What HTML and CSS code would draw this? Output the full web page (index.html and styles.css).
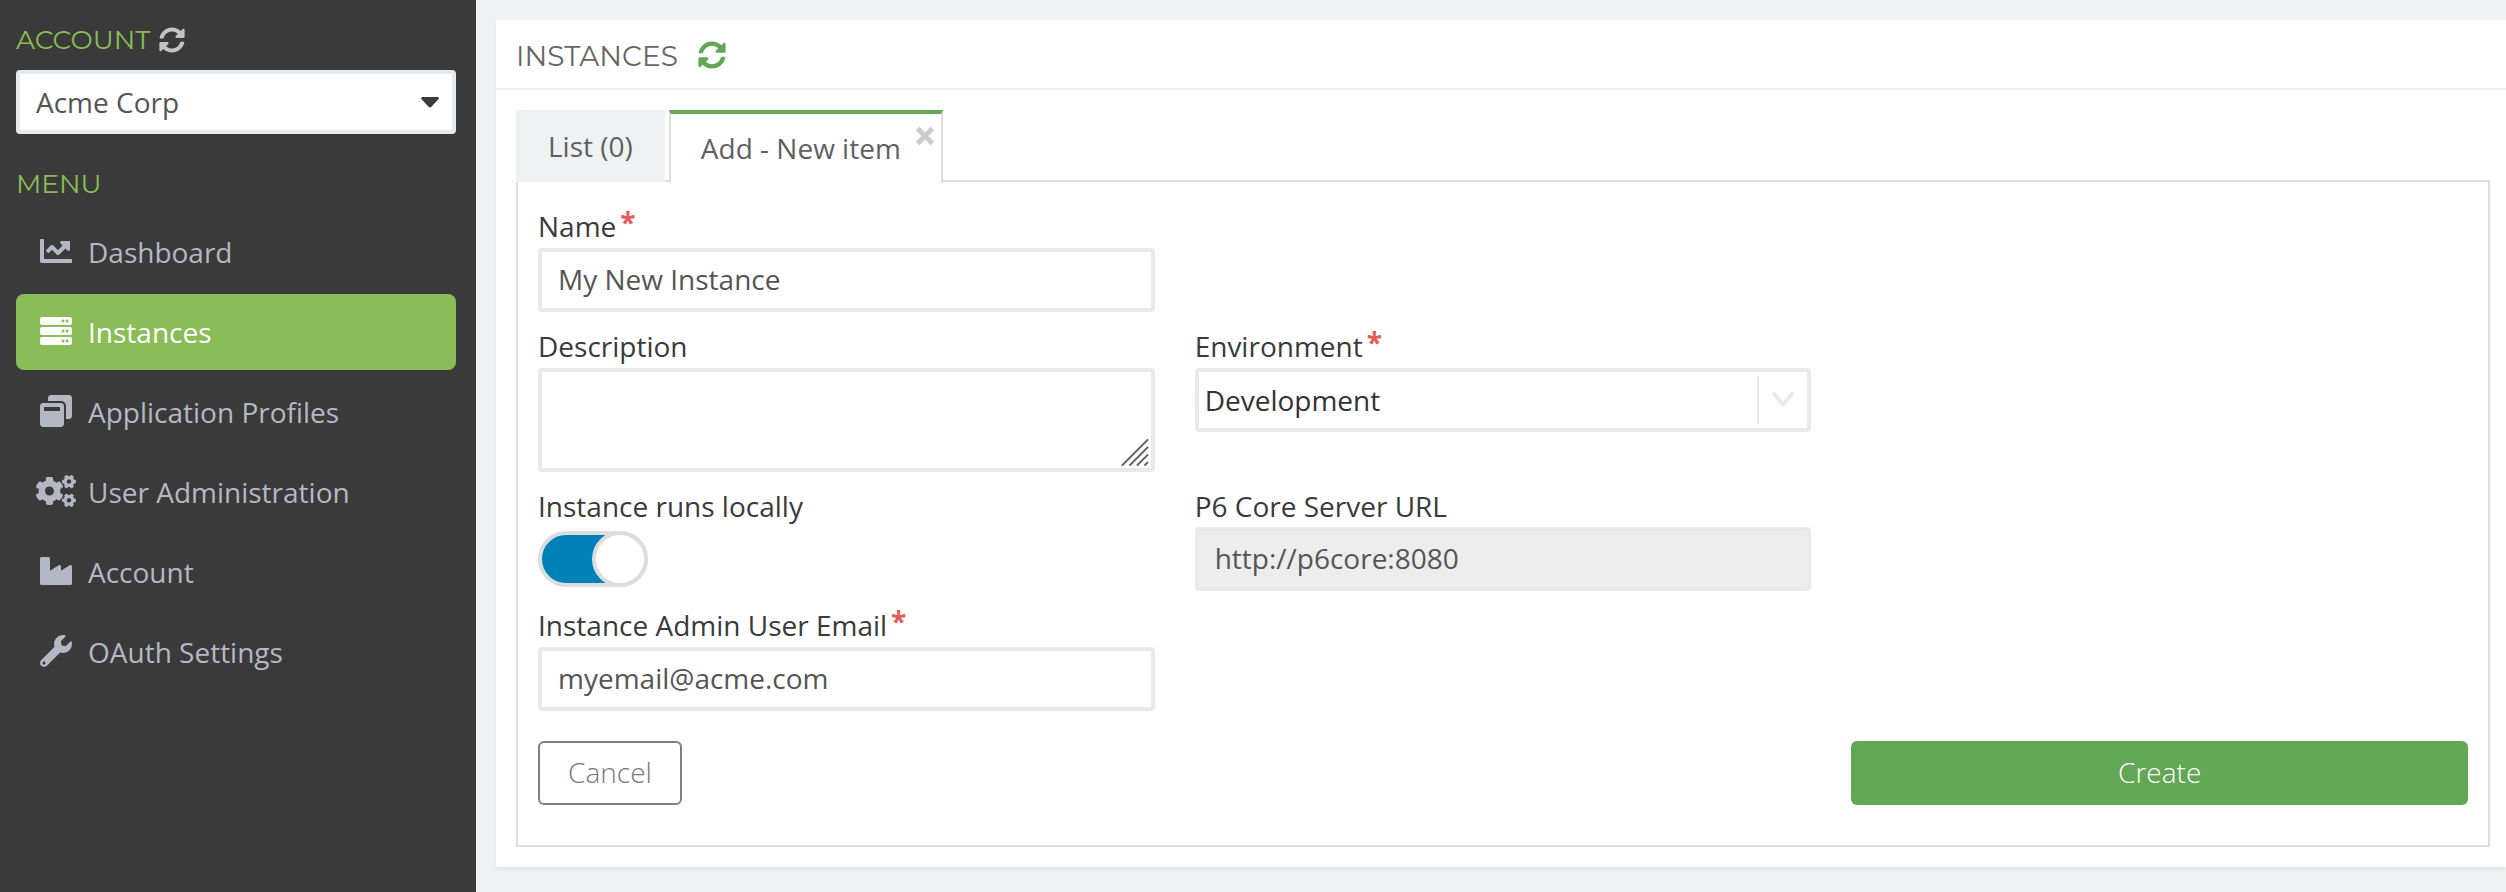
FILE: index.html
```html
<!DOCTYPE html>
<html lang="en">
<head>
<meta charset="utf-8">
<title>Instances</title>
<link rel="stylesheet" href="styles.css">
</head>
<body>
<svg class="defs" aria-hidden="true">
  <symbol id="sync" viewBox="0 0 512 512"><path d="M370.72 133.28C339.458 104.008 298.888 87.962 255.848 88c-77.458.068-144.328 53.178-162.791 126.85-1.344 5.363-6.122 9.15-11.651 9.15H24.103c-7.498 0-13.194-6.807-11.807-14.176C33.933 94.924 134.813 8 256 8c66.448 0 126.791 26.136 171.315 68.685L463.03 40.97C478.149 25.851 504 36.559 504 57.941V192c0 13.255-10.745 24-24 24H345.941c-21.382 0-32.09-25.851-16.971-40.971l41.75-41.749zM32 296h134.059c21.382 0 32.09 25.851 16.971 40.971l-41.75 41.75c31.262 29.273 71.835 45.319 114.876 45.28 77.418-.07 144.315-53.144 162.787-126.849 1.344-5.363 6.122-9.15 11.651-9.15h57.304c7.498 0 13.194 6.807 11.807 14.176C478.067 417.076 377.187 504 256 504c-66.448 0-126.791-26.136-171.315-68.685L48.97 471.03C33.851 486.149 8 475.441 8 454.059V320c0-13.255 10.745-24 24-24z"/></symbol>
  <path id="small-cog" d="M512.1 191l-8.2 14.3c-3 5.3-9.4 7.5-15.1 5.4-11.8-4.4-22.6-10.7-32.1-18.6-4.6-3.8-5.8-10.5-2.8-15.7l8.2-14.3c-6.9-8-12.3-17.3-15.9-27.4h-16.5c-6 0-11.2-4.3-12.2-10.3-2-12-2.1-24.6 0-37.1 1-6 6.2-10.4 12.2-10.4h16.5c3.6-10.1 9-19.4 15.9-27.4l-8.2-14.3c-3-5.2-1.9-11.9 2.8-15.7 9.5-7.9 20.4-14.2 32.1-18.6 5.7-2.1 12.1.1 15.1 5.4l8.2 14.3c10.5-1.9 21.2-1.9 31.7 0L552 6.3c3-5.3 9.4-7.5 15.1-5.4 11.8 4.4 22.6 10.7 32.1 18.6 4.6 3.8 5.8 10.5 2.8 15.7l-8.2 14.3c6.9 8 12.3 17.3 15.9 27.4h16.5c6 0 11.2 4.3 12.2 10.3 2 12 2.1 24.6 0 37.1-1 6-6.2 10.4-12.2 10.4h-16.5c-3.6 10.1-9 19.4-15.9 27.4l8.2 14.3c3 5.2 1.9 11.9-2.8 15.7-9.5 7.9-20.4 14.2-32.1 18.6-5.7 2.1-12.1-.1-15.1-5.4l-8.2-14.3c-10.4 1.9-21.2 1.9-31.7 0zm-10.5-58.8c38.5 29.6 82.4-14.3 52.8-52.8-38.5-29.7-82.4 14.3-52.8 52.8z"/>
</svg>
<div class="app">
  <aside class="sidebar">
    <h2 class="side-title">ACCOUNT <svg class="sync"><use href="#sync"/></svg></h2>
    <div class="account-select">Acme Corp<svg class="caret" viewBox="0 0 18 11"><path d="M1.2 0h15.6q1.8.5.6 2.2l-7 7.6q-1.4 1.4-2.8 0l-7-7.6Q-.6.5 1.2 0z"/></svg></div>
    <h2 class="side-title menu-title">MENU</h2>
    <nav class="menu">
      <a class="item"><svg class="icon" viewBox="0 0 512 512"><path d="M496 384H64V80c0-8.84-7.16-16-16-16H16C7.16 64 0 71.16 0 80v336c0 17.67 14.33 32 32 32h464c8.84 0 16-7.16 16-16v-32c0-8.84-7.16-16-16-16zM464 96H345.94c-21.38 0-32.09 25.85-16.97 40.97l32.4 32.4L288 242.75l-73.37-73.37c-12.5-12.5-32.76-12.5-45.25 0l-68.69 68.69c-6.25 6.25-6.25 16.38 0 22.63l22.62 22.62c6.25 6.25 16.38 6.25 22.63 0L192 237.25l73.37 73.37c12.5 12.5 32.76 12.5 45.25 0l96-96 32.4 32.4c15.12 15.12 40.97 4.41 40.97-16.97V112c.01-8.84-7.15-16-15.99-16z"/></svg>Dashboard</a>
      <a class="item active"><svg class="icon" viewBox="0 0 512 512"><g id="rack"><path d="M480 160H32c-17.673 0-32-14.327-32-32V64c0-17.673 14.327-32 32-32h448c17.673 0 32 14.327 32 32v64c0 17.673-14.327 32-32 32zm-48-88c-13.255 0-24 10.745-24 24s10.745 24 24 24 24-10.745 24-24-10.745-24-24-24zm-64 0c-13.255 0-24 10.745-24 24s10.745 24 24 24 24-10.745 24-24-10.745-24-24-24z"/></g><use href="#rack" y="160"/><use href="#rack" y="320"/></svg>Instances</a>
      <a class="item"><svg class="icon" viewBox="0 0 512 512"><path d="M512 48v288c0 26.5-21.5 48-48 48h-48V176c0-44.1-35.9-80-80-80H128V48c0-26.5 21.5-48 48-48h288c26.5 0 48 21.5 48 48zM384 176v288c0 26.5-21.5 48-48 48H48c-26.5 0-48-21.5-48-48V176c0-26.5 21.5-48 48-48h288c26.5 0 48 21.5 48 48zm-64 28c0-6.6-5.4-12-12-12H76c-6.6 0-12 5.4-12 12v52h256v-52z"/></svg>Application Profiles</a>
      <a class="item"><svg class="icon wide" viewBox="0 0 640 512"><use href="#small-cog"/><use href="#small-cog" y="298.9"/><path d="M386.3 286.1l33.7 16.8c10.1 5.8 14.5 18.1 10.5 29.1-8.9 24.2-26.4 46.4-42.6 65.8-7.4 8.9-20.2 11.1-30.3 5.3l-29.1-16.8c-16 13.7-34.6 24.6-54.9 31.7v33.6c0 11.6-8.3 21.6-19.7 23.6-24.6 4.2-50.4 4.4-75.9 0-11.5-2-20-11.9-20-23.6V418c-20.3-7.2-38.9-18-54.9-31.7L74 403c-10 5.8-22.9 3.6-30.3-5.3-16.2-19.4-33.3-41.6-42.2-65.7-4-10.9.4-23.2 10.5-29.1l33.3-16.8c-3.9-20.9-3.9-42.4 0-63.4L12 205.8c-10.1-5.8-14.6-18.1-10.5-29 8.9-24.2 26-46.4 42.2-65.8 7.4-8.9 20.2-11.1 30.3-5.3l29.1 16.8c16-13.7 34.6-24.6 54.9-31.7V57.1c0-11.5 8.2-21.5 19.6-23.5 24.6-4.2 50.5-4.4 76-.1 11.5 2 20 11.9 20 23.6v33.6c20.3 7.2 38.9 18 54.9 31.7l29.1-16.8c10-5.8 22.9-3.6 30.3 5.3 16.2 19.4 33.2 41.6 42.1 65.8 4 10.9.1 23.2-10 29.1l-33.7 16.8c3.9 21 3.9 42.5 0 63.5zm-117.6 21.1c59.2-77-28.7-164.9-105.7-105.7-59.2 77 28.7 164.9 105.7 105.7z"/></svg>User Administration</a>
      <a class="item"><svg class="icon" viewBox="0 0 512 512"><path d="M475.115 163.781L336 252.309v-68.28c0-18.916-20.931-30.399-36.885-20.248L160 252.309V56c0-13.255-10.745-24-24-24H24C10.745 32 0 42.745 0 56v400c0 13.255 10.745 24 24 24h464c13.255 0 24-10.745 24-24V184.029c0-18.917-20.931-30.399-36.885-20.248z"/></svg>Account</a>
      <a class="item"><svg class="icon" viewBox="0 0 512 512"><path d="M507.73 109.1c-2.24-9.03-13.54-12.09-20.12-5.51l-74.36 74.36-67.88-11.31-11.31-67.88 74.36-74.36c6.62-6.62 3.43-17.9-5.66-20.16-47.38-11.74-99.55.91-136.58 37.93-39.64 39.64-50.55 97.1-34.05 147.2L18.74 402.76c-24.99 24.99-24.99 65.51 0 90.5 24.99 24.99 65.51 24.99 90.5 0l213.21-213.21c50.12 16.71 107.47 5.68 147.37-34.22 37.07-37.07 49.7-89.32 37.91-136.73zM64 472c-13.25 0-24-10.75-24-24 0-13.26 10.75-24 24-24s24 10.74 24 24c0 13.25-10.75 24-24 24z"/></svg>OAuth Settings</a>
    </nav>
  </aside>
  <main class="main">
    <section class="panel">
      <header class="panel-head"><h1 class="panel-title">INSTANCES</h1><svg class="sync green"><use href="#sync"/></svg></header>
      <div class="panel-body">
        <div class="tabs">
          <div class="tab">List (0)</div>
          <div class="tab current">Add - New item<svg class="close" viewBox="0 0 20 20"><path d="M2.6 2.6l14.8 14.8M17.4 2.6L2.6 17.4"/></svg></div>
        </div>
        <form class="form">
          <div class="row">
            <div class="field"><label class="label">Name<span class="req">*</span></label><div class="input">My New Instance</div></div>
          </div>
          <div class="row">
            <div class="field"><label class="label">Description</label><div class="input area"><svg class="grip" viewBox="0 0 28 35"><path d="M1.5 33L26.500 8M9 33L26.500 15.500M16.500 33L26.500 23M24 33L26.500 30.500"/></svg></div></div>
            <div class="field"><label class="label">Environment<span class="req">*</span></label><div class="input select">Development<span class="drop"><svg class="chevron" viewBox="0 0 24 18"><path d="M3 3l9 10.500L21 3"/></svg></span></div></div>
          </div>
          <div class="row third">
            <div class="field"><label class="label">Instance runs locally</label><div class="toggle"><span class="knob"></span></div></div>
            <div class="field"><label class="label">P6 Core Server URL</label><div class="input disabled">http://p6core:8080</div></div>
          </div>
          <div class="row">
            <div class="field"><label class="label">Instance Admin User Email<span class="req">*</span></label><div class="input">myemail@acme.com</div></div>
          </div>
          <div class="row actions">
            <div class="field"><button type="button" class="btn cancel">Cancel</button></div>
            <div class="field"></div>
            <button type="button" class="btn create">Create</button>
          </div>
        </form>
      </div>
    </section>
  </main>
</div>
</body>
</html>
```
FILE: styles.css
```css
* { box-sizing: border-box; }
body {
  margin: 0;
  background: #eef2f3;
  font-family: "Open Sans", "Noto Sans", sans-serif;
  font-size: 28px;
  line-height: 40px;
  color: #3a3a3a;
  overflow: hidden;
}
.defs { display: none; }
svg { display: block; fill: currentColor; flex: none; }

.app { display: flex; height: 892px; }

/* Sidebar */
.sidebar { width: 476px; flex: none; padding: 20px 20px 0 16px; background: #3a3a3a; }
.side-title {
  display: flex;
  align-items: center;
  gap: 9px;
  margin: 0;
  height: 40px;
  font: 400 26.5px/40px Montserrat, Lato, sans-serif;
  color: #8abd57;
}
.sync { width: 26px; height: 26px; color: #c4c4c4; }
.account-select {
  display: flex;
  align-items: center;
  justify-content: space-between;
  height: 64px;
  margin-top: 10px;
  padding: 0 13px 0 16px;
  border: 4px solid #e6eaed;
  border-radius: 4px;
  background: #fff;
  color: #555;
}
.caret { width: 18px; height: 11px; color: #3a3a3a; }
.menu-title { margin-top: 30px; }
.menu { display: flex; flex-direction: column; gap: 4px; margin-top: 10px; }
.item {
  display: flex;
  align-items: center;
  gap: 16px;
  height: 76px;
  padding: 0 24px 1px;
  border-radius: 8px;
  color: #b4b8c5;
}
.item.active { background: #8abd57; color: #fff; }
.icon { width: 32px; height: 32px; margin-top: -1px; }
.icon.wide { width: 40px; margin-left: -4px; margin-right: -4px; }

/* Main panel */
.main { flex: 1; min-width: 0; padding: 20px 0 0 20px; }
.panel { height: 847px; background: #fff; box-shadow: 0 2px 4px rgba(0, 0, 0, 0.06); }
.panel-head {
  display: flex;
  align-items: center;
  gap: 20px;
  height: 70px;
  padding-left: 20px;
  border-bottom: 2px solid #edf1f4;
}
.panel-title {
  margin: 0;
  padding-top: 3px;
  font: 400 28px/40px Montserrat, Lato, sans-serif;
  color: #666;
}
.sync.green { width: 28px; height: 28px; color: #62a754; margin-top: 1px; }
.panel-body { padding: 20px 16px 0 20px; }

.tabs { display: flex; align-items: flex-start; gap: 4px; height: 70px; position: relative; z-index: 1; }
.tab { height: 72px; padding: 16px 32px 0; background: #eef2f3; color: #5f6062; }
.tab.current {
  position: relative;
  width: 274px;
  height: 73px;
  padding: 14px 29px 0 30px;
  border: 2px solid #ddd;
  border-top: 4px solid #62a754;
  border-bottom: 0;
  background: #fff;
  white-space: nowrap;
}
.close { position: absolute; right: 6px; top: 12px; width: 20px; height: 20px; fill: none; stroke: #ccc; stroke-width: 5; }

/* Form */
.form {
  display: flex;
  flex-direction: column;
  gap: 16px;
  height: 667px;
  padding: 26px 20px 0;
  border: 2px solid #ddd;
}
.row { display: grid; grid-template-columns: repeat(3, minmax(0, 1fr)); column-gap: 40px; align-items: start; }
.label { display: flex; height: 40px; line-height: 36px; }
.req { margin-left: 4px; line-height: 28px; font-weight: 700; color: #e45b5b; }
.input {
  height: 64px;
  padding: 0 16px;
  border: 4px solid #e6eaed;
  border-radius: 4px;
  line-height: 54px;
  color: #555;
}
.area { display: flex; justify-content: flex-end; align-items: flex-end; height: 104px; padding: 0 2px 1px; }
.grip { width: 28px; height: 35px; fill: none; stroke: #666; stroke-width: 2; stroke-linecap: round; }
.select { display: flex; justify-content: space-between; align-items: center; padding: 0 0 0 6px; color: #333; }
.drop { display: flex; align-items: center; justify-content: center; width: 50px; height: 48px; border-left: 2px solid #e6eaed; }
.chevron { width: 24px; height: 18px; fill: none; stroke: #e6eaed; stroke-width: 4; stroke-linecap: round; stroke-linejoin: round; }
.disabled { background: #ededed; }
.third { height: 103px; }
.third .label { height: 39px; }
.toggle {
  display: flex;
  justify-content: flex-end;
  width: 110px;
  height: 56px;
  margin-top: 4px;
  border: 4px solid #ddd;
  border-radius: 28px;
  background: #0082b8;
}
.knob { width: 56px; height: 56px; margin: -4px; border: 4px solid #ddd; border-radius: 50%; background: #fff; }
.actions { margin-top: 14px; }
.btn {
  height: 64px;
  padding: 0 0 2px;
  border-radius: 6px;
  font: 300 28px/40px "Open Sans", "Noto Sans", sans-serif;
}
.cancel { width: 144px; border: 2px solid #808080; background: #fff; color: #777; }
.create { border: 0; background: #62a754; color: #fff; }
```
